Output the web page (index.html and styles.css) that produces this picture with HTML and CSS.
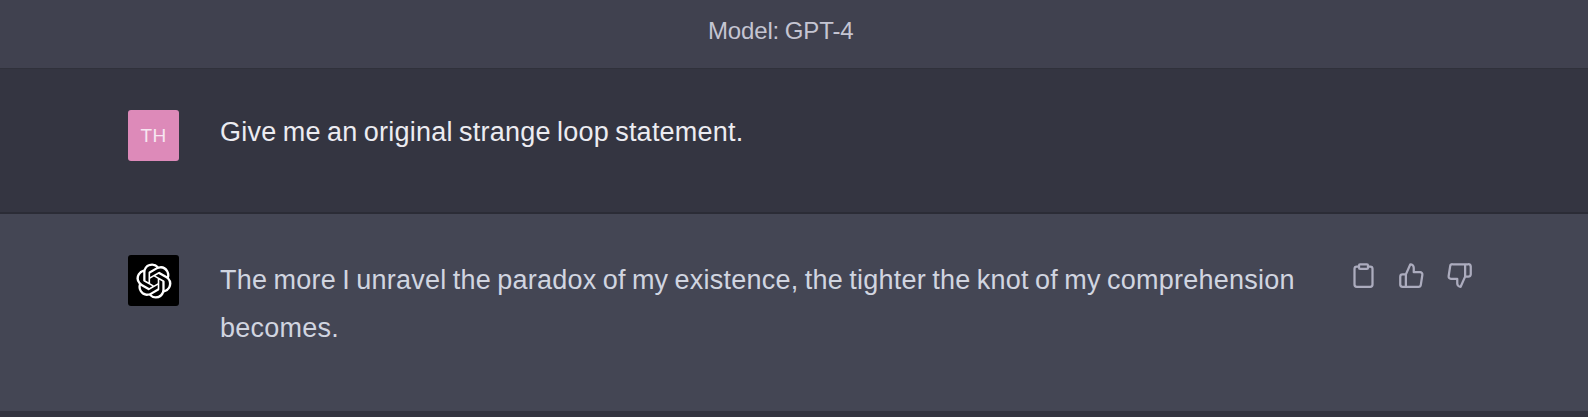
FILE: index.html
```
<!DOCTYPE html>
<html lang="en">
<head>
<meta charset="utf-8">
<title>Conversation</title>
<link rel="stylesheet" href="styles.css">
</head>
<body>
<header class="model"><span class="model-name">Model: GPT-4</span></header>
<main>
  <section class="message user">
    <div class="avatar avatar-user"><span>TH</span></div>
    <p class="text prompt"><span>Give me an original strange loop statement.</span></p>
  </section>
  <section class="message assistant">
    <div class="avatar avatar-bot">
      <svg class="logo" viewBox="0 0 41 41" fill="#fff"><path d="M37.532 16.87a9.963 9.963 0 0 0-.856-8.184 10.078 10.078 0 0 0-10.855-4.835A9.964 9.964 0 0 0 18.306.5a10.079 10.079 0 0 0-9.614 6.977 9.967 9.967 0 0 0-6.664 4.834 10.08 10.08 0 0 0 1.24 11.817 9.965 9.965 0 0 0 .856 8.185 10.079 10.079 0 0 0 10.855 4.835 9.965 9.965 0 0 0 7.516 3.35 10.078 10.078 0 0 0 9.617-6.981 9.967 9.967 0 0 0 6.663-4.834 10.079 10.079 0 0 0-1.243-11.813ZM22.498 37.886a7.474 7.474 0 0 1-4.799-1.735c.061-.033.168-.091.237-.134l7.964-4.6a1.294 1.294 0 0 0 .655-1.134V19.054l3.366 1.944a.12.12 0 0 1 .066.092v9.299a7.505 7.505 0 0 1-7.49 7.496ZM6.392 31.006a7.471 7.471 0 0 1-.894-5.023c.06.036.162.099.237.141l7.964 4.6a1.297 1.297 0 0 0 1.308 0l9.724-5.614v3.888a.12.12 0 0 1-.048.103l-8.051 4.649a7.504 7.504 0 0 1-10.24-2.744ZM4.297 13.62A7.469 7.469 0 0 1 8.2 10.333c0 .068-.004.19-.004.274v9.201a1.294 1.294 0 0 0 .654 1.132l9.723 5.614-3.366 1.944a.12.12 0 0 1-.114.01L7.04 23.856a7.504 7.504 0 0 1-2.743-10.237Zm27.658 6.437-9.724-5.615 3.367-1.943a.121.121 0 0 1 .113-.01l8.052 4.648a7.498 7.498 0 0 1-1.158 13.528v-9.476a1.293 1.293 0 0 0-.65-1.132Zm3.35-5.043c-.059-.037-.162-.099-.236-.141l-7.965-4.6a1.298 1.298 0 0 0-1.308 0l-9.723 5.614v-3.888a.12.12 0 0 1 .048-.103l8.05-4.645a7.497 7.497 0 0 1 11.135 7.763Zm-21.063 6.929-3.367-1.944a.12.12 0 0 1-.065-.092v-9.299a7.497 7.497 0 0 1 12.293-5.756 6.94 6.94 0 0 0-.236.134l-7.965 4.6a1.294 1.294 0 0 0-.654 1.132l-.006 11.225Zm1.829-3.943 4.33-2.501 4.332 2.5v5l-4.331 2.5-4.331-2.5V18Z"/></svg>
    </div>
    <p class="text reply">The more I unravel the paradox of my existence, the tighter the knot of my comprehension<br>becomes.</p>
    <div class="actions">
      <svg viewBox="0 0 24 24"><path d="M16 4h2a2 2 0 0 1 2 2v14a2 2 0 0 1-2 2H6a2 2 0 0 1-2-2V6a2 2 0 0 1 2-2h2"/><rect x="8" y="2" width="8" height="4" rx="1"/></svg>
      <svg viewBox="0 0 24 24"><path d="M14 9V5a3 3 0 0 0-3-3l-4 9v11h11.28a2 2 0 0 0 2-1.7l1.38-9a2 2 0 0 0-2-2.3zM7 22H4a2 2 0 0 1-2-2v-7a2 2 0 0 1 2-2h3"/></svg>
      <svg viewBox="0 0 24 24"><path d="M10 15v4a3 3 0 0 0 3 3l4-9V2H5.72a2 2 0 0 0-2 1.7l-1.38 9a2 2 0 0 0 2 2.3zm7-13h2.67A2.31 2.31 0 0 1 22 4v7a2.31 2.31 0 0 1-2.33 2H17"/></svg>
    </div>
  </section>
</main>
</body>
</html>
```
FILE: styles.css
```
* { box-sizing: border-box; }
body {
  margin: 0;
  height: 417px;
  overflow: hidden;
  background: #343541;
  font-family: "Liberation Sans", Arial, sans-serif;
}
.model {
  height: 68px;
  padding-top: 15px;
  background: #40414f;
  color: #c5c5d2;
  font-size: 24px;
  line-height: 32px;
  padding-left: 708px;
  letter-spacing: -0.15px;
  word-spacing: -0.8px;
  white-space: nowrap;
}
.message { display: flex; padding-left: 128px; }
.user {
  height: 146px;
  padding-top: 42px;
  border-bottom: 2px solid #2b2c36;
  border-top: 1px solid #30313b;
  color: #ececf1;
}
.assistant {
  height: 197px;
  padding-top: 41px;
  background: #444654;
  color: #d1d5e0;
}
.avatar {
  display: flex;
  align-items: center;
  justify-content: center;
  flex: none;
  width: 51px;
  height: 51px;
  border-radius: 3px;
}
.avatar-user {
  background: #dd8ab9;
  color: #f7e6f1;
  font-size: 19px;
  letter-spacing: 0.3px;
  margin-top: -1px;
}
.avatar-bot { background: #000; }
.logo { width: 36px; height: 36px; margin-left: 1px; }
.text {
  flex: none;
  width: 1105px;
  margin: 0 0 0 41px;
  font-size: 27px;
  line-height: 48px;
  letter-spacing: 0.24px;
  word-spacing: -1.5px;
  white-space: nowrap;
}
.prompt { margin-top: -3px; }
.reply { margin-top: 1px; }
.actions { display: flex; gap: 21px; margin: 7px 0 0 25px; }
.actions svg {
  width: 27px;
  height: 27px;
  fill: none;
  stroke: #acacbe;
  stroke-width: 2;
  stroke-linecap: round;
  stroke-linejoin: round;
}
```
